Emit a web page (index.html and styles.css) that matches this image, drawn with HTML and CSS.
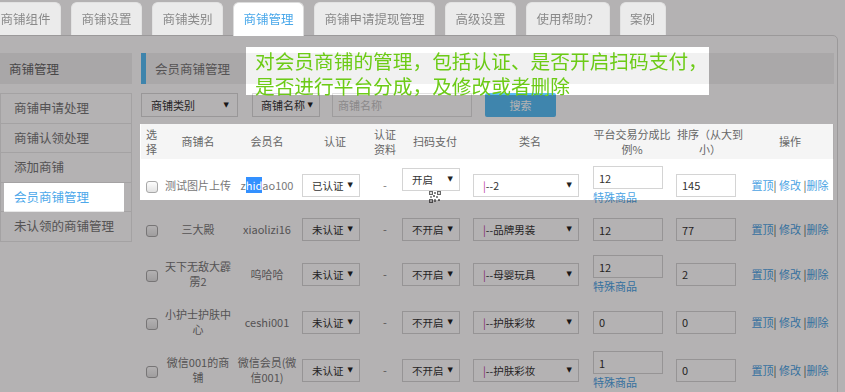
FILE: index.html
```html
<!DOCTYPE html>
<html lang="zh-CN">
<head>
    <meta charset="UTF-8">
    <meta name="viewport" content="width=device-width, initial-scale=1.0">
    <title>会员商铺管理</title>
    <link rel="stylesheet" href="styles.css">
</head>
<body>
    <div class="page">
        <ul class="tabs">
            <li>商铺组件</li>
            <li>商铺设置</li>
            <li>商铺类别</li>
            <li class="active">商铺管理</li>
            <li>商铺申请提现管理</li>
            <li>高级设置</li>
            <li>使用帮助？</li>
            <li>案例</li>
        </ul>

        <div class="pane">
            <div class="side">
                <div class="side-title">商铺管理</div>
                <ul class="side-menu">
                    <li>商铺申请处理</li>
                    <li>商铺认领处理</li>
                    <li>添加商铺</li>
                    <li class="current">会员商铺管理</li>
                    <li>未认领的商铺管理</li>
                </ul>
            </div>

            <div class="content">
                <div class="panel-title">会员商铺管理</div>

                <div class="filter">
                    <span class="dropdown cat">商铺类别<i>▼</i></span>
                    <span class="dropdown field">商铺名称<i>▼</i></span>
                    <input type="text" class="keyword" placeholder="商铺名称">
                    <button class="search">搜索</button>
                </div>

                <table class="shops">
                    <colgroup>
                        <col style="width:21px">
                        <col style="width:72px">
                        <col style="width:66px">
                        <col style="width:70px">
                        <col style="width:30px">
                        <col style="width:70px">
                        <col style="width:120px">
                        <col style="width:84px">
                        <col style="width:72px">
                        <col style="width:88px">
                    </colgroup>
                    <thead>
                        <tr>
                            <th>选择</th>
                            <th>商铺名</th>
                            <th>会员名</th>
                            <th>认证</th>
                            <th>认证资料</th>
                            <th>扫码支付</th>
                            <th>类名</th>
                            <th>平台交易分成比例%</th>
                            <th>排序（从大到小）</th>
                            <th>操作</th>
                        </tr>
                    </thead>
                    <tbody>
                        <tr>
                            <td><input type="checkbox" class="chk"></td>
                            <td>测试图片上传</td>
                            <td>z<span class="picked">hid</span>ao100</td>
                            <td><span class="sel">已认证<i>▼</i></span></td>
                            <td>-</td>
                            <td>
                                <div class="pay">
                                    <span class="sel">开启<i>▼</i></span>
                                    <svg class="qr" width="12" height="12" viewBox="0 0 12 12">
                                        <rect x="0" y="0" width="4" height="4" fill="#666"/>
                                        <rect x="1" y="1" width="2" height="2" fill="#ddd"/>
                                        <rect x="8" y="0" width="4" height="4" fill="#666"/>
                                        <rect x="9" y="1" width="2" height="2" fill="#ddd"/>
                                        <rect x="0" y="8" width="4" height="4" fill="#666"/>
                                        <rect x="1" y="9" width="2" height="2" fill="#ddd"/>
                                        <rect x="5" y="1" width="2" height="2" fill="#888"/>
                                        <rect x="4" y="4" width="2" height="2" fill="#777"/>
                                        <rect x="7" y="5" width="2" height="2" fill="#888"/>
                                        <rect x="1" y="5" width="2" height="2" fill="#999"/>
                                        <rect x="9" y="8" width="2" height="2" fill="#777"/>
                                        <rect x="5" y="8" width="2" height="3" fill="#888"/>
                                    </svg>
                                </div>
                            </td>
                            <td><span class="sel kind"><span><em>|</em>--2</span><i>▼</i></span></td>
                            <td>
                                <div class="rate">
                                    <input type="text" class="num" value="12">
                                    <a class="special">特殊商品</a>
                                </div>
                            </td>
                            <td><input type="text" class="num sort" value="145"></td>
                            <td class="ops"><a>置顶</a><span class="sep">|</span> <a>修改</a> <span class="sep">|</span><a>删除</a></td>
                        </tr>
                        <tr>
                            <td><input type="checkbox" class="chk"></td>
                            <td>三大殿</td>
                            <td>xiaolizi16</td>
                            <td><span class="sel">未认证<i>▼</i></span></td>
                            <td>-</td>
                            <td><span class="sel">不开启<i>▼</i></span></td>
                            <td><span class="sel kind"><span><em>|</em>--品牌男装</span><i>▼</i></span></td>
                            <td>
                                <div class="rate">
                                    <input type="text" class="num" value="12">
                                </div>
                            </td>
                            <td><input type="text" class="num sort" value="77"></td>
                            <td class="ops"><a>置顶</a><span class="sep">|</span> <a>修改</a> <span class="sep">|</span><a>删除</a></td>
                        </tr>
                        <tr>
                            <td><input type="checkbox" class="chk"></td>
                            <td>天下无敌大霹雳2</td>
                            <td>呜哈哈</td>
                            <td><span class="sel">未认证<i>▼</i></span></td>
                            <td>-</td>
                            <td><span class="sel">不开启<i>▼</i></span></td>
                            <td><span class="sel kind"><span><em>|</em>--母婴玩具</span><i>▼</i></span></td>
                            <td>
                                <div class="rate">
                                    <input type="text" class="num" value="12">
                                    <a class="special">特殊商品</a>
                                </div>
                            </td>
                            <td><input type="text" class="num sort" value="2"></td>
                            <td class="ops"><a>置顶</a><span class="sep">|</span> <a>修改</a> <span class="sep">|</span><a>删除</a></td>
                        </tr>
                        <tr>
                            <td><input type="checkbox" class="chk"></td>
                            <td>小护士护肤中心</td>
                            <td>ceshi001</td>
                            <td><span class="sel">未认证<i>▼</i></span></td>
                            <td>-</td>
                            <td><span class="sel">不开启<i>▼</i></span></td>
                            <td><span class="sel kind"><span><em>|</em>--护肤彩妆</span><i>▼</i></span></td>
                            <td>
                                <div class="rate">
                                    <input type="text" class="num" value="0">
                                </div>
                            </td>
                            <td><input type="text" class="num sort" value="0"></td>
                            <td class="ops"><a>置顶</a><span class="sep">|</span> <a>修改</a> <span class="sep">|</span><a>删除</a></td>
                        </tr>
                        <tr>
                            <td><input type="checkbox" class="chk"></td>
                            <td>微信001的商铺</td>
                            <td>微信会员(微信001)</td>
                            <td><span class="sel">未认证<i>▼</i></span></td>
                            <td>-</td>
                            <td><span class="sel">不开启<i>▼</i></span></td>
                            <td><span class="sel kind"><span><em>|</em>--护肤彩妆</span><i>▼</i></span></td>
                            <td>
                                <div class="rate">
                                    <input type="text" class="num" value="1">
                                    <a class="special">特殊商品</a>
                                </div>
                            </td>
                            <td><input type="text" class="num sort" value="0"></td>
                            <td class="ops"><a>置顶</a><span class="sep">|</span> <a>修改</a> <span class="sep">|</span><a>删除</a></td>
                        </tr>
                    </tbody>
                </table>
            </div>
        </div>
    </div>

    <!-- tutorial spotlight: dims everything except the cut-out holes -->
    <div class="mask"></div>
    <div class="tip">对会员商铺的管理，包括认证、是否开启扫码支付，<br>是否进行平台分成，及修改或者删除</div>
</body>
</html>
```

FILE: styles.css
```css
body {
    margin: 0;
    font-family: "Noto Sans CJK SC", "Microsoft YaHei", sans-serif;
    background: #fff;
    color: #333;
    overflow: hidden;
}

.page {
    width: 848px;
    margin-left: -10px;
}

/* top tabs */
.tabs {
    display: flex;
    align-items: flex-start;
    list-style: none;
    margin: 0 0 -1px;
    padding: 2px 0 0;
    height: 34px;
    position: relative;
    z-index: 1;
}
.tabs li {
    box-sizing: border-box;
    height: 33px;
    line-height: 32px;
    padding: 0 9.5px;
    margin-right: 10px;
    font-size: 12.5px;
    color: #8a8a8a;
    background: #ebebeb;
    border: 1px solid #e2e2e2;
    border-bottom: 0;
    border-radius: 6px 6px 0 0;
}
.tabs li.active {
    height: 34px;
    background: #fff;
    border-color: #dcdcdc;
    color: #4aa8ea;
}

.pane {
    display: flex;
    gap: 9px;
    height: 380px;
    padding: 17px 3px 0 9px;
    border: 1px solid #dcdcdc;
    border-radius: 0 5px 0 0;
}

/* left menu */
.side {
    width: 132px;
    flex: none;
}
.side-title {
    height: 31px;
    line-height: 31px;
    padding-left: 9px;
    background: #efefef;
    font-size: 12.5px;
    color: #666;
}
.side-menu {
    list-style: none;
    margin: 9px 0 0;
    padding: 0;
    border: 1px solid #e8e8e8;
    border-bottom: 0;
}
.side-menu li {
    height: 28.5px;
    line-height: 28.5px;
    padding-left: 13px;
    border-bottom: 1px solid #e8e8e8;
    font-size: 12.5px;
    color: #777;
}
.side-menu li.current {
    background: #fff;
    color: #4da8ea;
}

/* main area */
.content {
    flex: 1;
    min-width: 0;
}
.panel-title {
    height: 31px;
    line-height: 31px;
    padding-left: 9px;
    background: #f1f1f1;
    border-left: 5px solid #56bdf5;
    font-size: 12.5px;
    color: #777;
}

.filter {
    display: flex;
    align-items: center;
    height: 24px;
    margin-top: 9px;
}
.dropdown {
    display: inline-flex;
    align-items: center;
    justify-content: space-between;
    box-sizing: border-box;
    height: 24px;
    border: 1px solid #d8d8d8;
    background: #fff;
    font-size: 11px;
    color: #333;
}
.dropdown i,
.sel i {
    font-style: normal;
    font-family: "DejaVu Sans", sans-serif;
    font-size: 7px;
    color: #222;
}
.cat {
    width: 97px;
    padding: 0 8px 0 9px;
}
.field {
    width: 68px;
    margin-left: 14px;
    padding: 0 6px 0 8px;
}
.keyword {
    box-sizing: border-box;
    width: 140px;
    height: 24px;
    margin: 0 0 0 12px;
    padding: 0 5px;
    border: 1px solid #e0e0e0;
    font: 11px "Noto Sans CJK SC", sans-serif;
    outline: none;
}
.keyword::placeholder {
    color: #c4c4c4;
}
.search {
    width: 71px;
    height: 24px;
    margin-left: 13px;
    border: 0;
    border-radius: 2px;
    background: #58bff6;
    color: #fff;
    font: 11px "Noto Sans CJK SC", sans-serif;
}

/* shop table */
.shops {
    width: 693px;
    margin-top: 7px;
    table-layout: fixed;
    border-collapse: collapse;
    font-size: 11px;
    color: #777;
}
.shops th {
    height: 35px;
    padding: 0 2px;
    background: #f5f5f5;
    font-weight: normal;
    color: #666;
    line-height: 15px;
}
.shops td {
    padding: 7px 0;
    text-align: center;
    vertical-align: middle;
    line-height: 15px;
}

.chk {
    appearance: none;
    -webkit-appearance: none;
    box-sizing: border-box;
    width: 12px;
    height: 12px;
    margin: 0;
    border: 1px solid #a8a8a8;
    border-radius: 3px;
    background: linear-gradient(#fdfdfd, #e2e2e2);
    vertical-align: middle;
}

.picked {
    background: #3390ff;
    color: #fff;
}

.sel {
    display: inline-flex;
    align-items: center;
    justify-content: space-between;
    box-sizing: border-box;
    width: 58px;
    height: 23px;
    margin-right: 8px;
    padding: 0 6px 0 9px;
    border: 1px solid #d4d4d4;
    background: #fff;
    color: #333;
    font-size: 10.5px;
    vertical-align: middle;
}
.sel.kind {
    width: 106px;
}
.sel em {
    font-style: normal;
    color: #b9369a;
}

.pay {
    display: flex;
    flex-direction: column;
    align-items: center;
}
.qr {
    display: block;
}

.rate {
    display: inline-block;
    width: 70px;
    margin-right: 8px;
    text-align: left;
    vertical-align: middle;
}
.num {
    display: block;
    box-sizing: border-box;
    width: 70px;
    height: 23px;
    margin: 0;
    padding: 0 5px;
    border: 1px solid #d4d4d4;
    font: 11px "Noto Sans CJK SC", sans-serif;
    color: #333;
    outline: none;
}
.num.sort {
    display: inline-block;
    width: 60px;
    margin-right: 8px;
    vertical-align: middle;
}
.special {
    display: block;
    margin-top: 1px;
    line-height: 14px;
    color: #4ba3e3;
}

.ops a {
    color: #4ba3e3;
    text-decoration: none;
}
.ops .sep {
    color: #555;
}

/* spotlight overlay */
.mask {
    position: fixed;
    inset: 0;
    background: rgba(6, 0, 3, 0.3);
    clip-path: path(evenodd, "M0 0H845V392H0Z M246 47H709V95H246Z M4 183H124V212H4Z M140 124H833V200H140Z");
    pointer-events: none;
}
.tip {
    position: absolute;
    left: 255px;
    top: 48px;
    font-size: 19.7px;
    line-height: 25px;
    color: #6ccb16;
    white-space: nowrap;
}
```
